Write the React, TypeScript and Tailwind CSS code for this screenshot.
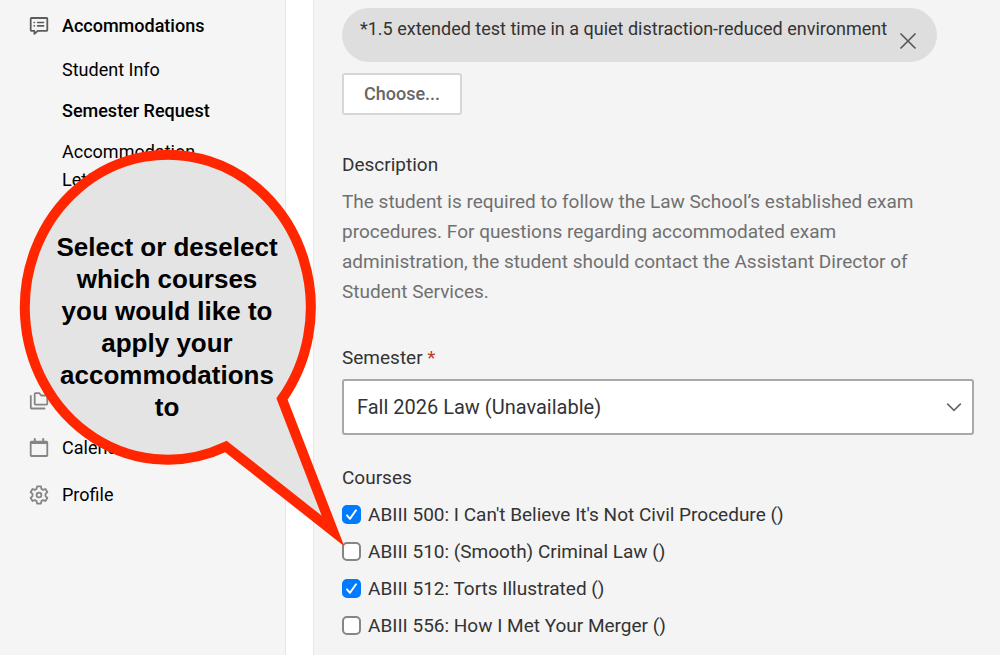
import { useState } from "react";
import type { ReactNode } from "react";

const COURSES = [
  { id: "500", name: "ABIII 500: I Can't Believe It's Not Civil Procedure ()", selected: true },
  { id: "510", name: "ABIII 510: (Smooth) Criminal Law ()", selected: false },
  { id: "512", name: "ABIII 512: Torts Illustrated ()", selected: true },
  { id: "556", name: "ABIII 556: How I Met Your Merger ()", selected: false },
];

function Icon({ children }: { children: ReactNode }) {
  return (
    <svg
      viewBox="0 0 20 20"
      className="h-5 w-5 shrink-0"
      fill="none"
      stroke="currentColor"
      strokeWidth="1.8"
      strokeLinecap="round"
      strokeLinejoin="round"
      aria-hidden="true"
    >
      {children}
    </svg>
  );
}

function AccommodationsIcon() {
  return (
    <Icon>
      <path d="M2.4 2h15.2a.7.7 0 0 1 .7.7v11.4a.7.7 0 0 1-.7.7H8.8l-3.4 3v-3h-3a.7.7 0 0 1-.7-.7V2.7a.7.7 0 0 1 .7-.7z" />
      <path d="M5.2 6.5h.2M8.6 6.5h6M5.2 9.9h.2M8.6 9.9h6" strokeWidth="1.6" />
    </Icon>
  );
}

function FoldersIcon() {
  return (
    <Icon>
      <path d="M6.6 2.2h3.8l1.8 2.3h5.2a.9.9 0 0 1 .9.9v7.3a.9.9 0 0 1-.9.9H6.6a.9.9 0 0 1-.9-.9V3.1a.9.9 0 0 1 .9-.9z" />
      <path d="M1.8 5v11.8a.7.7 0 0 0 .7.7h13" />
    </Icon>
  );
}

function CalendarIcon() {
  return (
    <Icon>
      <path d="M2.4 3.6h15.2a.7.7 0 0 1 .7.7v13a.7.7 0 0 1-.7.7H2.4a.7.7 0 0 1-.7-.7v-13a.7.7 0 0 1 .7-.7z" />
      <path d="M2 4.9h16M5.8 1v3.6M14.2 1v3.6" strokeWidth="2" />
    </Icon>
  );
}

function GearIcon() {
  return (
    <Icon>
      <path d="M8.1 1.4h3.8l.5 2.5 1.7 1 2.4-.9 1.9 3.2-1.9 1.7v2.2l1.9 1.7-1.9 3.2-2.4-.9-1.7 1-.5 2.5H8.1l-.5-2.5-1.7-1-2.4.9-1.9-3.2 1.9-1.7V8.9L1.6 7.2 3.5 4l2.4.9 1.7-1z" />
      <circle cx="10" cy="10" r="2.4" />
    </Icon>
  );
}

function Sidebar() {
  return (
    <nav className="w-[286px] shrink-0 border-r border-[#e6e6e6] bg-[#f5f5f5] pl-[29px] text-lg leading-7 text-black">
      <a href="#accommodations" className="mt-3 flex items-center gap-[13px] font-medium">
        <span className="text-[#5c5c5c]">
          <AccommodationsIcon />
        </span>
        Accommodations
      </a>
      <ul className="mt-4 flex w-[188px] flex-col gap-[13px] pl-[33px]">
        <li>
          <a href="#student-info">Student Info</a>
        </li>
        <li>
          <a href="#semester-request" className="font-medium" aria-current="page">
            Semester Request
          </a>
        </li>
        <li>
          <a href="#letters">Accommodation Letters</a>
        </li>
      </ul>
      <ul className="mt-[193px] flex flex-col gap-[19px]">
        <li>
          <a href="#documents" aria-label="Documents" className="flex h-7 items-center text-[#858585]">
            <FoldersIcon />
          </a>
        </li>
        <li>
          <a href="#calendar" className="flex items-center gap-[13px]">
            <span className="text-[#858585]">
              <CalendarIcon />
            </span>
            Calendar
          </a>
        </li>
        <li>
          <a href="#profile" className="flex items-center gap-[13px]">
            <span className="text-[#858585]">
              <GearIcon />
            </span>
            Profile
          </a>
        </li>
      </ul>
    </nav>
  );
}

function CourseOption({ id, name, selected }: { id: string; name: string; selected: boolean }) {
  const [checked, setChecked] = useState(selected);

  return (
    <label htmlFor={`course-${id}`} className="flex h-[37px] items-center gap-[7px]">
      <span className="grid h-[19px] w-[19px] place-items-center">
        <input
          id={`course-${id}`}
          type="checkbox"
          checked={checked}
          onChange={(e) => setChecked(e.target.checked)}
          className="col-start-1 row-start-1 h-[19px] w-[19px] appearance-none rounded-[5px] border-2 border-[#868686] bg-white checked:border-[#007aff] checked:bg-[#007aff]"
        />
        {checked && (
          <svg
            viewBox="0 0 19 19"
            className="pointer-events-none col-start-1 row-start-1 h-[19px] w-[19px]"
            fill="none"
            stroke="white"
            strokeWidth="2"
            strokeLinecap="round"
            strokeLinejoin="round"
            aria-hidden="true"
          >
            <path d="M5 10.4l3 3.4 6-8.6" />
          </svg>
        )}
      </span>
      {name}
    </label>
  );
}

function RequestForm() {
  return (
    <main className="ml-[27px] min-w-0 flex-1 border-l border-[#e6e6e6] bg-[#f4f4f4] pr-[26px] pl-7 text-[19px] leading-[30px] text-[#333]">
      <div className="mt-2 flex h-[54px] w-fit items-start gap-3 rounded-full bg-[#dedede] pr-5 pl-[18px] text-lg">
        <span className="mt-[7px]">*1.5 extended test time in a quiet distraction-reduced environment</span>
        <button type="button" aria-label="Remove accommodation" className="mt-6 text-[#555]">
          <svg viewBox="0 0 18 18" className="h-[18px] w-[18px]" fill="none" stroke="currentColor" strokeWidth="1.6" aria-hidden="true">
            <path d="M1.5 1.5l15 15M16.5 1.5l-15 15" />
          </svg>
        </button>
      </div>
      <button
        type="button"
        className="mt-[11px] block h-[42px] w-[120px] rounded-[3px] border-2 border-[#d6d6d6] bg-white text-lg font-medium text-[#666]"
      >
        Choose...
      </button>

      <h2 className="mt-[35px]">Description</h2>
      <p className="mt-[7px] pr-4 text-[#707070]">
        The student is required to follow the Law School’s established exam procedures. For questions regarding
        accommodated exam administration, the student should contact the Assistant Director of Student Services.
      </p>

      <label htmlFor="semester" className="mt-9 block">
        Semester <span className="text-[#c0392b]">*</span>
      </label>
      <div className="relative mt-1.5">
        <select
          id="semester"
          className="h-14 w-full appearance-none rounded-[3px] border-2 border-[#a8a8a8] bg-white px-[13px] text-xl"
        >
          <option>Fall 2026 Law (Unavailable)</option>
        </select>
        <svg
          viewBox="0 0 16 16"
          className="pointer-events-none absolute top-5 right-3 h-4 w-4"
          fill="none"
          stroke="#666"
          strokeWidth="1.6"
          aria-hidden="true"
        >
          <path d="M1.2 4.6L8 11.4l6.8-6.8" />
        </svg>
      </div>

      <fieldset className="mt-7">
        <legend>Courses</legend>
        <div className="mt-[3px]">
          {COURSES.map((course) => (
            <CourseOption key={course.id} {...course} />
          ))}
        </div>
      </fieldset>
    </main>
  );
}

// Speech bubble laid over the page, its tail ending at the course checkboxes.
function Callout() {
  return (
    <aside className="pointer-events-none absolute top-[145px] left-[15px] h-[405px] w-[335px]">
      <svg viewBox="15 145 335 405" className="h-full w-full" aria-hidden="true">
        <path
          d="M226 446.5A143 152.5 0 1 1 282 399L333 531Z"
          fill="#e4e4e4"
          stroke="#ff2600"
          strokeWidth="10"
          strokeMiterlimit="10"
        />
      </svg>
      <p className="absolute top-[86px] left-[37px] w-[230px] text-center font-['Liberation_Sans',Arial,sans-serif] text-[26px] leading-8 font-bold text-black">
        Select or deselect which courses you would like to apply your accommodations to
      </p>
    </aside>
  );
}

export default function App() {
  return (
    <div className="relative flex min-h-screen bg-white font-[Roboto,sans-serif]">
      <Sidebar />
      <RequestForm />
      <Callout />
    </div>
  );
}
